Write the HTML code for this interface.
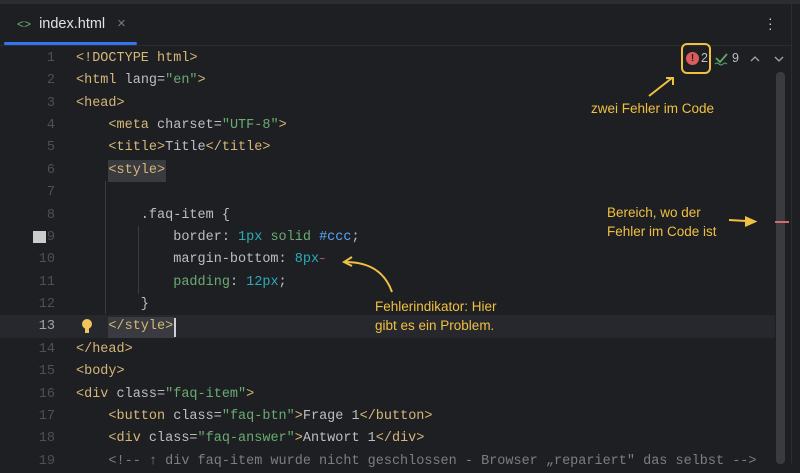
<!DOCTYPE html>
<html><head><style>
body{margin:0;width:800px;height:464px;overflow:hidden;background:#1e1f22;position:relative;font-family:"Liberation Mono",monospace;}
.l{position:absolute;left:76px;height:22px;line-height:22px;font-size:13.5px;color:#bcbec4;white-space:pre}
.n{position:absolute;width:55px;text-align:right;left:0;height:22px;line-height:22px;font-size:13.5px;color:#4b5059}
.t{color:#d5b778}.s{color:#6aab73}.a{color:#bcbec4}.num{color:#2aacb8}.b{color:#56a8f5}.g{color:#6aab73}
.ann{position:absolute;font-family:"Liberation Sans",sans-serif;font-size:13.5px;color:#f0c040;line-height:19px}
</style></head><body>
<div style="position:absolute;left:0;top:0;width:800px;height:4px;background:#2b2d30"></div>
<div style="position:absolute;left:0;top:45px;width:791px;height:1px;background:#2b2d30"></div>
<div style="position:absolute;left:4px;top:42px;width:133px;height:3px;background:#3574f0;border-radius:2px"></div>
<div style="position:absolute;left:17px;top:16px;font-family:'Liberation Sans',sans-serif;font-size:14.5px;color:#dfe1e5"><span style="color:#6aab73;font-size:12px">&lt;&gt;</span>&nbsp; index.html &nbsp;&nbsp;<span style="color:#7a7e85">×</span></div>
<div style="position:absolute;left:768px;top:16px;color:#cfd1d6;font-size:14px;line-height:5px;font-family:'Liberation Sans'">·<br>·<br>·</div>
<div style="position:absolute;left:791px;top:0;width:1px;height:464px;background:#2b2d30"></div>
<div style="position:absolute;left:0;top:315px;width:775px;height:23px;background:#26282e"></div>
<div style="position:absolute;left:105px;top:181px;width:1px;height:133px;background:#393b40"></div>
<div style="position:absolute;left:138px;top:226px;width:1px;height:68px;background:#393b40"></div>
<div style="position:absolute;left:108px;top:160px;width:58px;height:22px;background:#393b40"></div>
<div style="position:absolute;left:108px;top:317px;width:67px;height:21px;background:#393b40"></div>
<div style="position:absolute;left:174px;top:318px;width:2px;height:19px;background:#ced0d6"></div>
<div style="position:absolute;left:33px;top:231px;width:13px;height:12px;background:#cccccc"></div>
<div style="position:absolute;left:82px;top:319px;width:10px;height:10px;border-radius:50%;background:#f2c55c"></div>
<div style="position:absolute;left:85px;top:328px;width:4px;height:5px;background:#f2c55c"></div>

<div class="n" style="top:48px">1</div><div class="l" style="top:48px"><span class="t">&lt;!DOCTYPE html&gt;</span></div>
<div class="n" style="top:70px">2</div><div class="l" style="top:70px"><span class="t">&lt;html</span> lang=<span class="s">"en"</span><span class="t">&gt;</span></div>
<div class="n" style="top:93px">3</div><div class="l" style="top:93px"><span class="t">&lt;head&gt;</span></div>
<div class="n" style="top:115px">4</div><div class="l" style="top:115px">    <span class="t">&lt;meta</span> charset=<span class="s">"UTF-8"</span><span class="t">&gt;</span></div>
<div class="n" style="top:137px">5</div><div class="l" style="top:137px">    <span class="t">&lt;title&gt;</span>Title<span class="t">&lt;/title&gt;</span></div>
<div class="n" style="top:160px">6</div><div class="l" style="top:160px">    <span class="t">&lt;style&gt;</span></div>
<div class="n" style="top:182px">7</div>
<div class="n" style="top:205px">8</div><div class="l" style="top:205px">        .faq-item {</div>
<div class="n" style="top:227px">9</div><div class="l" style="top:227px">            border: <span class="num">1px</span> <span class="g">solid</span> <span class="b">#ccc</span>;</div>
<div class="n" style="top:249px">10</div><div class="l" style="top:249px">            margin-bottom: <span class="num">8px</span><span style="color:#e06c75;font-size:10px">~</span></div>
<div class="n" style="top:272px">11</div><div class="l" style="top:272px">            <span class="g">padding</span>: <span class="num">12px</span>;</div>
<div class="n" style="top:294px">12</div><div class="l" style="top:294px">        }</div>
<div class="n" style="top:316px;color:#a1a3ab">13</div><div class="l" style="top:316px">    <span class="t">&lt;/style&gt;</span></div>
<div class="n" style="top:339px">14</div><div class="l" style="top:339px"><span class="t">&lt;/head&gt;</span></div>
<div class="n" style="top:361px">15</div><div class="l" style="top:361px"><span class="t">&lt;body&gt;</span></div>
<div class="n" style="top:384px">16</div><div class="l" style="top:384px"><span class="t">&lt;div</span> class=<span class="s">"faq-item"</span><span class="t">&gt;</span></div>
<div class="n" style="top:406px">17</div><div class="l" style="top:406px">    <span class="t">&lt;button</span> class=<span class="s">"faq-btn"</span><span class="t">&gt;</span>Frage 1<span class="t">&lt;/button&gt;</span></div>
<div class="n" style="top:428px">18</div><div class="l" style="top:428px">    <span class="t">&lt;div</span> class=<span class="s">"faq-answer"</span><span class="t">&gt;</span>Antwort 1<span class="t">&lt;/div&gt;</span></div>
<div class="n" style="top:451px">19</div><div class="l" style="top:451px;color:#7a7e85">    &lt;!-- ↑ div faq-item wurde nicht geschlossen - Browser „repariert" das selbst --&gt;</div>

<div style="position:absolute;left:776px;top:72px;width:9px;height:392px;background:#3a3b3e;border-radius:4px"></div>
<div style="position:absolute;left:775px;top:221px;width:14px;height:2px;background:#d36a72"></div>
<div style="position:absolute;left:681px;top:43px;width:30px;height:31px;border:2px solid #f0c040;border-radius:6px;box-sizing:border-box"></div>
<div style="position:absolute;left:686px;top:52px;width:13px;height:13px;border-radius:50%;background:#db5c5c;color:#1e1f22;font:bold 10px 'Liberation Sans';text-align:center;line-height:13px">!</div>
<div style="position:absolute;left:701px;top:51px;font:12.5px 'Liberation Sans';color:#bcbec4">2</div>
<svg style="position:absolute;left:714px;top:52px" width="16" height="14"><path d="M2 6l4 4 7-8" stroke="#5fa864" stroke-width="1.8" fill="none"/><path d="M1 12q2-2 4 0t4 0 4 0" stroke="#5fa864" stroke-width="1" fill="none"/></svg>
<div style="position:absolute;left:732px;top:51px;font:12.5px 'Liberation Sans';color:#bcbec4">9</div>
<svg style="position:absolute;left:748px;top:52px" width="44" height="14"><path d="M3 9l4-4 4 4M27 5l4 4 4-4" stroke="#a1a3ab" stroke-width="1.3" fill="none"/></svg>
<svg style="position:absolute;left:0;top:0" width="800" height="464"><g stroke="#f0c040" stroke-width="2" fill="none"><path d="M649 96L672 78"/><path d="M666 78h7v7"/><path d="M729 220l26 1.5"/><path d="M755 221.5l-9 -4v8z" fill="#f0c040"/><path d="M392 292C385 272 370 262 345 262"/><path d="M352 257l-8 5 8 4"/></g></svg>
<div class="ann" style="left:591px;top:99px">zwei Fehler im Code</div>
<div class="ann" style="left:607px;top:203px">Bereich, wo der<br>Fehler im Code ist</div>
<div class="ann" style="left:375px;top:297px">Fehlerindikator: Hier<br>gibt es ein Problem.</div>
</body></html>
